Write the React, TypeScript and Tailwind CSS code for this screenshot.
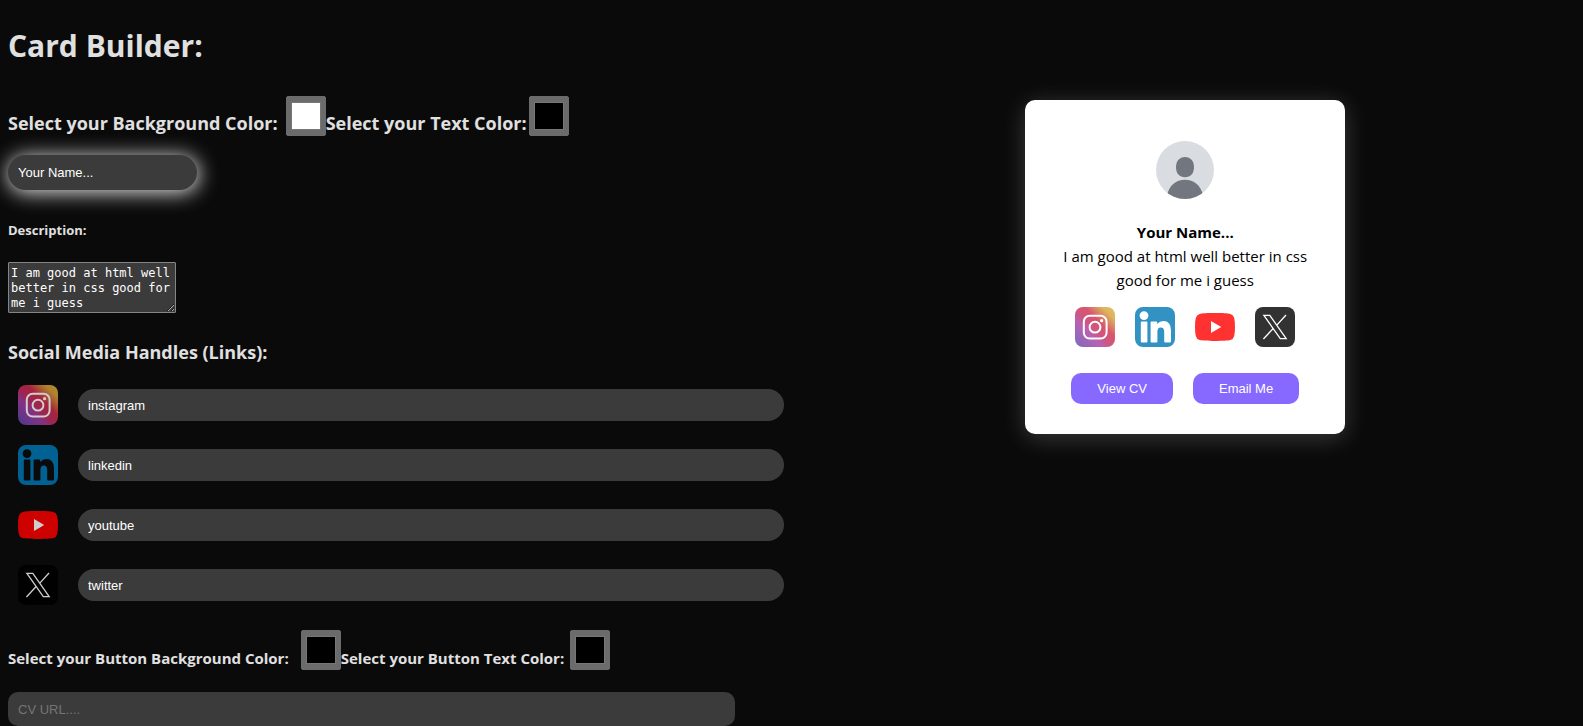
import { useState } from "react";

type IconProps = { className?: string };

function InstagramIcon({ className }: IconProps) {
  return (
    <svg viewBox="0 0 40 40" className={className} aria-hidden="true">
      <defs>
        <linearGradient id="instagram-fill" x1="0" y1="1" x2="1" y2="0">
          <stop offset="0" stopColor="#5648ac" />
          <stop offset="0.16" stopColor="#7c42a8" />
          <stop offset="0.34" stopColor="#a43ca4" />
          <stop offset="0.46" stopColor="#c22d62" />
          <stop offset="0.62" stopColor="#d02a4c" />
          <stop offset="0.74" stopColor="#d0703c" />
          <stop offset="0.84" stopColor="#d8a038" />
          <stop offset="1" stopColor="#dbb038" />
        </linearGradient>
      </defs>
      <rect width="40" height="40" rx="8" fill="url(#instagram-fill)" />
      <rect x="8.8" y="8.8" width="22.8" height="22.8" rx="6" fill="none" stroke="#fff" strokeWidth="2" />
      <circle cx="20" cy="20.2" r="5.4" fill="none" stroke="#fff" strokeWidth="2" />
      <circle cx="26.6" cy="13.7" r="1.6" fill="#fff" />
    </svg>
  );
}

function LinkedinIcon({ className }: IconProps) {
  return (
    <svg viewBox="0 0 40 40" className={className} aria-hidden="true">
      <path
        fillRule="evenodd"
        fill="#0077b5"
        d="M8 0H32A8 8 0 0 1 40 8V32A8 8 0 0 1 32 40H8A8 8 0 0 1 0 32V8A8 8 0 0 1 8 0ZM9 4.2A4.4 4.4 0 1 0 9 13A4.4 4.4 0 1 0 9 4.2ZM6.8 14.6Q5.8 14.6 5.8 15.6V34.6Q5.8 35.6 6.8 35.6H11.4Q12.4 35.6 12.4 34.6V15.6Q12.4 14.6 11.4 14.6ZM16.6 14.6Q15.6 14.6 15.6 15.6V34.6Q15.6 35.6 16.6 35.6H21.4Q22.4 35.6 22.4 34.6V24.8Q22.4 20.4 25.8 20.4Q29.2 20.4 29.2 24.8V34.6Q29.2 35.6 30.2 35.6H35Q36 35.6 36 34.6V23.6Q36 14.1 28.4 14.1Q24.6 14.1 22.2 17V15.6Q22.2 14.6 21.2 14.6Z"
      />
    </svg>
  );
}

function YoutubeIcon({ className }: IconProps) {
  return (
    <svg viewBox="0 0 40 40" className={className} aria-hidden="true">
      <path
        fill="#f00"
        d="M20 6C27 6 33 6.2 35.4 6.9Q38.5 7.8 39.2 11Q40 14.4 40 20T39.2 29Q38.5 32.2 35.4 33.1C33 33.8 27 34 20 34S7 33.8 4.6 33.1Q1.5 32.2 .8 29Q0 25.6 0 20T.8 11Q1.5 7.8 4.6 6.9C7 6.2 13 6 20 6Z"
      />
      <path fill="#fff" d="M16 14L26.2 20L16 26Z" />
    </svg>
  );
}

function XIcon({ className }: IconProps) {
  return (
    <svg viewBox="0 0 40 40" className={className} aria-hidden="true">
      <rect width="40" height="40" rx="8" />
      <path
        fill="none"
        stroke="#fff"
        strokeWidth="1.3"
        d="M8.9 8.4H14.8L31.2 31.6H25.3ZM31 8L21.6 18.4M8.4 32L18.4 21.2"
      />
    </svg>
  );
}

const socials = [
  { name: "instagram", Icon: InstagramIcon },
  { name: "linkedin", Icon: LinkedinIcon },
  { name: "youtube", Icon: YoutubeIcon },
  { name: "twitter", Icon: XIcon },
];

type ColorFieldProps = { id: string; value: string; onChange: (value: string) => void };

function ColorField({ id, value, onChange }: ColorFieldProps) {
  return (
    <input
      id={id}
      type="color"
      value={value}
      onChange={(e) => onChange(e.target.value)}
      className="size-10 shrink-0 appearance-none rounded-xs border border-[#6b6b6b] bg-[#6b6b6b] px-[2px] py-px [&::-webkit-color-swatch]:rounded-none [&::-webkit-color-swatch]:border [&::-webkit-color-swatch]:border-solid [&::-webkit-color-swatch]:border-[#777777] [&::-webkit-color-swatch-wrapper]:px-[2px] [&::-webkit-color-swatch-wrapper]:py-1"
    />
  );
}

export default function App() {
  const [background, setBackground] = useState("#ffffff");
  const [color, setColor] = useState("#000000");
  const [buttonBackground, setButtonBackground] = useState("#000000");
  const [buttonColor, setButtonColor] = useState("#000000");
  const [name, setName] = useState("Your Name...");
  const [description, setDescription] = useState("I am good at html well better in css good for me i guess");

  return (
    <div className="flex min-h-screen items-start bg-[#0a0a0a] px-2 font-['Open_Sans','Noto_Sans',sans-serif] text-[#e0e0e0]">
      <form className="w-1/2 pt-6 pr-2">
        <h1 className="text-[30px] leading-[44px] font-bold">Card Builder:</h1>

        <div className="mt-7 flex items-end text-lg leading-[26px] font-bold">
          <label htmlFor="background" className="mr-2">Select your Background Color:</label>
          <ColorField id="background" value={background} onChange={setBackground} />
          <label htmlFor="color" className="mr-[2px]">Select your Text Color:</label>
          <ColorField id="color" value={color} onChange={setColor} />
        </div>

        <input
          aria-label="Name"
          value={name}
          onChange={(e) => setName(e.target.value)}
          className="mt-[19px] block h-[35px] w-[189px] rounded-[20px] bg-[#3b3b3b] px-[10px] font-['Liberation_Sans',sans-serif] text-[13px] text-white shadow-[1px_2px_20px_1px_#e0e0e0] outline-none"
        />

        <label htmlFor="description" className="mt-[30px] block text-[13px] leading-5 font-bold">Description:</label>
        <textarea
          id="description"
          rows={3}
          value={description}
          onChange={(e) => setDescription(e.target.value)}
          className="mt-[22px] block h-[51px] w-[168px] resize overflow-hidden rounded-[1px] border border-[#858585] bg-[#3b3b3b] px-[2px] pt-[3px] font-['DejaVu_Sans_Mono',monospace] text-[12px] leading-[15px] text-white outline-none"
        />

        <h3 className="mt-[25px] text-lg leading-7 font-bold">Social Media Handles (Links):</h3>

        <div className="mt-[19px] flex flex-col gap-5">
          {socials.map(({ name: social, Icon }) => (
            <div key={social} className="flex items-center gap-5 pl-[10px]">
              <Icon className="size-10 shrink-0 opacity-80" />
              <input
                aria-label={social}
                defaultValue={social}
                className="h-8 min-w-0 flex-1 rounded-2xl bg-[#3b3b3b] px-[10px] font-['Liberation_Sans',sans-serif] text-[13px] text-white outline-none"
              />
            </div>
          ))}
        </div>

        <div className="mt-[25px] flex items-end text-[15px] leading-[24px] font-bold">
          <label htmlFor="button-background" className="mr-3">Select your Button Background Color:</label>
          <ColorField id="button-background" value={buttonBackground} onChange={setButtonBackground} />
          <label htmlFor="button-color" className="mr-[6px]">Select your Button Text Color:</label>
          <ColorField id="button-color" value={buttonColor} onChange={setButtonColor} />
        </div>

        <input
          aria-label="CV URL"
          placeholder="CV URL...."
          className="mt-[22px] block h-[34px] w-15/16 rounded-[10px] bg-[#3b3b3b] px-[10px] font-['Liberation_Sans',sans-serif] text-[13px] text-white outline-none placeholder:text-[#757575]"
        />
      </form>

      <div className="flex w-1/2 justify-center pt-[100px] pl-1">
        <section
          className="flex w-80 flex-col items-center rounded-[10px] px-[30px] pt-[41px] pb-[30px] shadow-[0_4px_25px_rgba(255,255,255,0.2)]"
          style={{ backgroundColor: background, color }}
        >
          <svg viewBox="0 0 58 58" className="size-[58px]" role="img" aria-label="Profile picture">
            <clipPath id="avatar-clip">
              <circle cx="29" cy="29" r="29" />
            </clipPath>
            <g clipPath="url(#avatar-clip)">
              <rect width="58" height="58" fill="#d9dce1" />
              <path fill="#72777f" d="M29 16C34.5 16 38 20.2 38 26C38 32.6 34.5 36.3 29 36.3S20 32.6 20 26C20 20.2 23.5 16 29 16Z" />
              <path fill="#72777f" d="M11 54C13.5 44 20 38.7 29 38.7S44.5 44 47 54V58H11Z" />
            </g>
          </svg>
          <h2 className="mt-[21px] text-[15px] leading-6 font-bold">{name}</h2>
          <p className="text-center text-[15px] leading-6">{description}</p>
          <div className="mt-[15px] flex gap-5">
            {socials.map(({ name: social, Icon }) => (
              <a key={social} href={`#${social}`} aria-label={social}>
                <Icon className="size-10 opacity-80" />
              </a>
            ))}
          </div>
          <div className="mt-[26px] flex gap-5 font-['Liberation_Sans',sans-serif] text-[13px] text-white">
            <button type="button" className="h-[31px] rounded-[10px] bg-[#8769ff] px-[26px]">View CV</button>
            <button type="button" className="h-[31px] rounded-[10px] bg-[#8769ff] px-[26px]">Email Me</button>
          </div>
        </section>
      </div>
    </div>
  );
}
